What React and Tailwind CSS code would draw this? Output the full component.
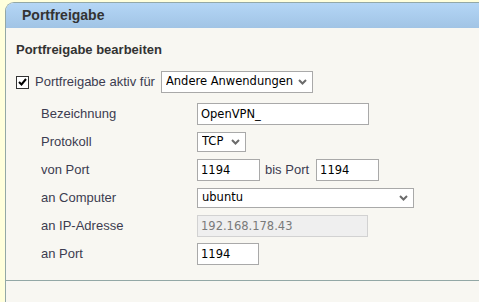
import React from 'react';

const labelFont = { fontFamily: '"Liberation Sans", Arial, sans-serif' };
const fieldFont = { fontFamily: '"DejaVu Sans", Tahoma, sans-serif' };

const Chevron = () => (
  <svg width="9" height="6" viewBox="0 0 9 6" className="pointer-events-none absolute right-[6px] top-1/2 -translate-y-1/2">
    <path d="M1 1 L4.5 4.5 L8 1" fill="none" stroke="#6b6b6b" strokeWidth="2" />
  </svg>
);

const Select = ({ value, width, height = 'h-[20px]' }) => (
  <div className={`relative ${width} ${height}`}>
    <select
      defaultValue={value}
      className="block w-full h-full appearance-none bg-white border border-[#a9a9a9] pl-[4px] text-[11.5px] text-black outline-none"
      style={fieldFont}
    >
      <option>{value}</option>
    </select>
    <Chevron />
  </div>
);

const Input = ({ value, width, disabled }) => (
  <input
    type="text"
    defaultValue={value}
    disabled={disabled}
    className={`block ${width} h-[22px] border px-[3px] text-[11.5px] outline-none ${
      disabled ? 'bg-[#efefef] border-[#d2d2d2] text-[#7a7a7a]' : 'bg-white border-[#a9a9a9] text-black'
    }`}
    style={fieldFont}
  />
);

const Row = ({ label, children }) => (
  <div className="flex items-center h-[28px]">
    <div className="w-[156px] text-[13px] text-[#3c3c50]" style={labelFont}>{label}</div>
    {children}
  </div>
);

export default function App() {
  return (
    <div className="w-[479px] h-[302px] bg-[#ffffdc] pl-[5px] pt-[2px] overflow-hidden">
      <div className="h-full bg-[#f8f7f2] border-l border-t border-[#93a8a6] rounded-tl-[9px] overflow-hidden">
        {/* Header */}
        <div
          className="h-[25px] bg-gradient-to-b from-[#b4d6f6] to-[#a1c4e5] pl-[16px] flex items-center text-[14px] font-bold text-[#333]"
          style={labelFont}
        >
          Portfreigabe
        </div>

        {/* Body */}
        <div className="pl-[10px] pt-[14px]">
          <div className="text-[13px] font-bold text-[#333] leading-[16px]" style={labelFont}>
            Portfreigabe bearbeiten
          </div>

          <div className="flex items-center h-[22px] mt-[13px]">
            <span className="w-[13px] h-[13px] border border-[#333] bg-white flex items-center justify-center">
              <svg width="9" height="8" viewBox="0 0 9 8">
                <path d="M1 4 L3.5 6.5 L8 1" fill="none" stroke="#000" strokeWidth="2" />
              </svg>
            </span>
            <span className="ml-[6px] mr-[6px] text-[13px] text-[#3c3c50]" style={labelFont}>
              Portfreigabe aktiv für
            </span>
            <Select value="Andere Anwendungen" width="w-[152px]" height="h-[22px]" />
          </div>

          <div className="mt-[7px] pl-[25px]">
            <Row label="Bezeichnung">
              <Input value="OpenVPN_" width="w-[172px]" />
            </Row>
            <Row label="Protokoll">
              <Select value="TCP" width="w-[49px]" />
            </Row>
            <Row label="von Port">
              <Input value="1194" width="w-[63px]" />
              <span className="ml-[5px] mr-[7px] text-[13px] text-[#3c3c50]" style={labelFont}>bis Port</span>
              <Input value="1194" width="w-[63px]" />
            </Row>
            <Row label="an Computer">
              <Select value="ubuntu" width="w-[217px]" />
            </Row>
            <Row label="an IP-Adresse">
              <Input value="192.168.178.43" width="w-[171px]" disabled />
            </Row>
            <Row label="an Port">
              <Input value="1194" width="w-[62px]" />
            </Row>
          </div>
        </div>

        <div className="mt-[12px] border-t border-[#93a8a6]" />
      </div>
    </div>
  );
}
